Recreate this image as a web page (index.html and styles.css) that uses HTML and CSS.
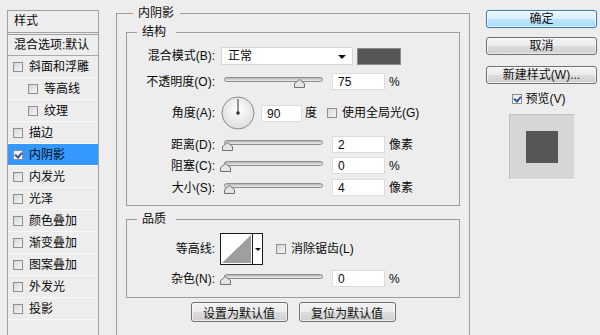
FILE: index.html
```html
<!DOCTYPE html>
<html lang="zh-CN">
<head>
    <meta charset="UTF-8">
    <title>图层样式 - 内阴影</title>
    <link rel="stylesheet" href="styles.css">
</head>
<body>
    <div class="dialog">
        <!-- 样式列表 -->
        <aside class="style-list">
            <div class="list-title">样式</div>
            <div class="list-head">混合选项:默认</div>
            <div class="list-item"><span class="cb"></span>斜面和浮雕</div>
            <div class="list-item sub"><span class="cb"></span>等高线</div>
            <div class="list-item sub"><span class="cb"></span>纹理</div>
            <div class="list-item"><span class="cb"></span>描边</div>
            <div class="list-item active"><span class="cb checked"></span>内阴影</div>
            <div class="list-item"><span class="cb"></span>内发光</div>
            <div class="list-item"><span class="cb"></span>光泽</div>
            <div class="list-item"><span class="cb"></span>颜色叠加</div>
            <div class="list-item"><span class="cb"></span>渐变叠加</div>
            <div class="list-item"><span class="cb"></span>图案叠加</div>
            <div class="list-item"><span class="cb"></span>外发光</div>
            <div class="list-item"><span class="cb"></span>投影</div>
        </aside>

        <!-- 内阴影 设置 -->
        <fieldset class="panel">
            <legend>内阴影</legend>

            <fieldset class="group group-structure">
                <legend>结构</legend>

                <div class="row row-blend">
                    <label class="lbl">混合模式(B):</label>
                    <div class="select">正常<span class="caret"></span></div>
                    <span class="swatch"></span>
                </div>

                <div class="row row-opacity">
                    <label class="lbl">不透明度(O):</label>
                    <div class="slider">
                        <div class="track"></div>
                        <svg class="thumb" style="left:74px" width="11" height="9" viewBox="0 0 11 9"><path d="M5.5 0.5 L10.5 4.5 L10.5 8.5 L0.5 8.5 L0.5 4.5 Z" fill="#e4e4e4" stroke="#707070"/></svg>
                    </div>
                    <div class="field">75</div>
                    <span class="unit">%</span>
                </div>

                <div class="row row-angle">
                    <label class="lbl">角度(A):</label>
                    <svg class="dial" width="34" height="34" viewBox="0 0 34 34">
                        <defs>
                            <radialGradient id="dialFill" cx="50%" cy="40%" r="60%">
                                <stop offset="0" stop-color="#ffffff"/>
                                <stop offset="1" stop-color="#dedede"/>
                            </radialGradient>
                        </defs>
                        <circle cx="17" cy="17" r="16" fill="url(#dialFill)" stroke="#8a8a8a"/>
                        <line x1="17" y1="17" x2="17" y2="3" stroke="#333" stroke-width="1"/>
                        <circle cx="17" cy="17" r="1.8" fill="#333"/>
                    </svg>
                    <div class="field field-angle">90</div>
                    <span class="unit">度</span>
                    <span class="cb cb-global"></span>
                    <span class="cb-label">使用全局光(G)</span>
                </div>

                <div class="row row-distance">
                    <label class="lbl">距离(D):</label>
                    <div class="slider">
                        <div class="track"></div>
                        <svg class="thumb" style="left:2px" width="11" height="9" viewBox="0 0 11 9"><path d="M5.5 0.5 L10.5 4.5 L10.5 8.5 L0.5 8.5 L0.5 4.5 Z" fill="#e4e4e4" stroke="#707070"/></svg>
                    </div>
                    <div class="field">2</div>
                    <span class="unit">像素</span>
                </div>

                <div class="row row-choke">
                    <label class="lbl">阻塞(C):</label>
                    <div class="slider">
                        <div class="track"></div>
                        <svg class="thumb" style="left:0" width="11" height="9" viewBox="0 0 11 9"><path d="M5.5 0.5 L10.5 4.5 L10.5 8.5 L0.5 8.5 L0.5 4.5 Z" fill="#e4e4e4" stroke="#707070"/></svg>
                    </div>
                    <div class="field">0</div>
                    <span class="unit">%</span>
                </div>

                <div class="row row-size">
                    <label class="lbl">大小(S):</label>
                    <div class="slider">
                        <div class="track"></div>
                        <svg class="thumb" style="left:4px" width="11" height="9" viewBox="0 0 11 9"><path d="M5.5 0.5 L10.5 4.5 L10.5 8.5 L0.5 8.5 L0.5 4.5 Z" fill="#e4e4e4" stroke="#707070"/></svg>
                    </div>
                    <div class="field">4</div>
                    <span class="unit">像素</span>
                </div>
            </fieldset>

            <fieldset class="group group-quality">
                <legend>品质</legend>

                <div class="row row-contour">
                    <label class="lbl">等高线:</label>
                    <div class="contour">
                        <svg class="curve" width="31" height="30" viewBox="0 0 31 30"><polygon points="1,29 30,1 30,29" fill="#9f9f9f"/></svg>
                        <div class="contour-drop"><span class="caret"></span></div>
                    </div>
                    <span class="cb cb-anti"></span>
                    <span class="cb-label">消除锯齿(L)</span>
                </div>

                <div class="row row-noise">
                    <label class="lbl">杂色(N):</label>
                    <div class="slider">
                        <div class="track"></div>
                        <svg class="thumb" style="left:0" width="11" height="9" viewBox="0 0 11 9"><path d="M5.5 0.5 L10.5 4.5 L10.5 8.5 L0.5 8.5 L0.5 4.5 Z" fill="#e4e4e4" stroke="#707070"/></svg>
                    </div>
                    <div class="field">0</div>
                    <span class="unit">%</span>
                </div>
            </fieldset>

            <div class="actions">
                <button class="btn btn-wide">设置为默认值</button>
                <button class="btn btn-wide">复位为默认值</button>
            </div>
        </fieldset>

        <!-- 右侧按钮 -->
        <div class="side">
            <button class="btn btn-side btn-default">确定</button>
            <button class="btn btn-side btn-cancel">取消</button>
            <button class="btn btn-side btn-new">新建样式(W)...</button>
            <div class="preview-toggle">
                <span class="cb checked"></span>
                <span>预览(V)</span>
            </div>
            <div class="preview-box">
                <div class="preview-square"></div>
            </div>
        </div>
    </div>
</body>
</html>
```

FILE: styles.css
```css
html, body {
    margin: 0;
    padding: 0;
    height: 335px;
    overflow: hidden;
}

body {
    background-color: #ededed;
    font-family: "Liberation Sans", "Noto Sans CJK SC", sans-serif;
    font-size: 12px;
    line-height: 16px;
    color: #0a0a0a;
}

.dialog {
    display: flex;
    align-items: flex-start;
    padding-left: 7px;
}

/* 样式列表 */
.style-list {
    width: 92px;
    height: 325px;
    margin-top: 10px;
    box-sizing: border-box;
    border: 1px solid #a0a0a0;
    border-bottom: none;
}

.list-title {
    height: 21px;
    line-height: 21px;
    padding-left: 6px;
    border-bottom: 1px solid #a0a0a0;
}

.list-head {
    height: 20px;
    line-height: 20px;
    padding-left: 6px;
    margin-top: 1px;
    border-top: 1px solid #a0a0a0;
    border-bottom: 1px solid #a8a8a8;
}

.list-item {
    display: flex;
    align-items: center;
    height: 21px;
    padding-left: 5px;
    border-bottom: 1px solid #f8f8f8;
}

.list-item.sub {
    padding-left: 20px;
}

.list-item.active {
    background-color: #3399ff;
}

.list-item .cb {
    margin-right: 6px;
}

/* 复选框 */
.cb {
    display: inline-block;
    flex: none;
    width: 10px;
    height: 10px;
    box-sizing: border-box;
    border: 1px solid #8e8e8e;
    background: linear-gradient(135deg, #d6d6d6, #f6f6f6);
    position: relative;
}

.cb.checked {
    background: linear-gradient(135deg, #e6e6e6, #ffffff);
}

.cb.checked::after {
    content: "";
    position: absolute;
    left: 2px;
    top: 0;
    width: 3px;
    height: 5px;
    border-right: 2px solid #3552a8;
    border-bottom: 2px solid #3552a8;
    transform: rotate(40deg);
}

.cb-label {
    margin-left: 5px;
}

/* 主面板 */
.panel {
    width: 354px;
    height: 330px;
    box-sizing: border-box;
    margin: 5px 0 0 17px;
    padding: 0 9px;
    min-width: 0;
    border: 1px solid #9c9c9c;
    border-bottom: none;
}

.panel > legend {
    margin-left: 7px;
    padding: 0 6px 0 5px;
    line-height: 16px;
}

.group {
    margin: 3px 0 0 0;
    padding: 0 0 9px 0;
    min-width: 0;
    border: 1px solid #9c9c9c;
}

.group > legend {
    margin-left: 10px;
    padding: 0 10px 0 5px;
    line-height: 16px;
}

.group-quality {
    margin-top: 5px;
    padding-bottom: 10px;
}

.row {
    display: flex;
    align-items: center;
    height: 17px;
}

.row-blend { margin-top: 7px; height: 18px; }
.row-opacity { margin-top: 8px; }
.row-angle { margin-top: 6px; height: 34px; }
.row-distance { margin-top: 6px; }
.row-choke { margin-top: 4px; }
.row-size { margin-top: 5px; }
.row-contour { margin-top: 6px; height: 32px; }
.row-noise { margin-top: 5px; }

.lbl {
    flex: none;
    width: 88px;
    text-align: right;
    white-space: nowrap;
}

.select {
    position: relative;
    width: 132px;
    height: 18px;
    margin-left: 6px;
    box-sizing: border-box;
    padding-left: 6px;
    line-height: 17px;
    background-color: #fff;
    border: 1px solid #d8d8d8;
}

.caret {
    display: inline-block;
    width: 0;
    height: 0;
    border-left: 4px solid transparent;
    border-right: 4px solid transparent;
    border-top: 4px solid #111;
}

.select .caret {
    position: absolute;
    right: 6px;
    top: 7px;
}

.swatch {
    width: 44px;
    height: 17px;
    margin-left: 4px;
    box-sizing: border-box;
    background-color: #565656;
    border: 1px solid #8a8a8a;
}

/* 滑块 */
.slider {
    position: relative;
    width: 105px;
    height: 17px;
    margin-left: 5px;
    flex: none;
}

.track {
    position: absolute;
    left: 4px;
    right: 2px;
    top: 4px;
    height: 5px;
    box-sizing: border-box;
    border: 1px solid #8d8d8d;
    border-radius: 3px;
    background: linear-gradient(#b4b4b4, #ececec);
}

.thumb {
    position: absolute;
    top: 6px;
}

.field {
    width: 53px;
    height: 17px;
    margin-left: 7px;
    box-sizing: border-box;
    padding-left: 5px;
    line-height: 16px;
    background-color: #fff;
    border: 1px solid #dcdcdc;
    flex: none;
}

.field-angle {
    width: 41px;
    margin-left: 6px;
}

.unit {
    margin-left: 4px;
}

.dial {
    margin-left: 6px;
    flex: none;
}

.row-angle .unit {
    margin-left: 3px;
}

.cb-global {
    margin-left: 10px;
}

/* 等高线 */
.contour {
    display: flex;
    width: 43px;
    height: 32px;
    margin-left: 5px;
    box-sizing: border-box;
    border: 1px solid #1a1a1a;
    background-color: #fff;
}

.curve {
    display: block;
}

.contour-drop {
    flex: 1;
    display: flex;
    justify-content: center;
    align-items: center;
    border-left: 1px solid #1a1a1a;
}

.contour-drop .caret {
    border-left-width: 3px;
    border-right-width: 3px;
    border-top-width: 3px;
}

.cb-anti {
    margin-left: 13px;
}

/* 按钮 */
.btn {
    font-family: inherit;
    font-size: 12px;
    color: #111;
    padding: 0;
    border: 1px solid #707070;
    border-radius: 3px;
    background: linear-gradient(#f3f3f3 0%, #ebebeb 50%, #dddddd 51%, #cfcfcf 100%);
    box-shadow: inset 0 0 0 1px rgba(255,255,255,0.6);
}

.actions {
    display: flex;
    justify-content: center;
    gap: 11px;
    margin-top: 4px;
}

.btn-wide {
    width: 97px;
    height: 20px;
}

.side {
    display: flex;
    flex-direction: column;
    align-items: center;
    width: 111px;
    margin-left: 16px;
    padding-top: 10px;
}

.btn-side {
    width: 111px;
    height: 18px;
    line-height: 16px;
}

.btn-default {
    border-color: #3c7fb1;
    background: linear-gradient(#eaf6fd 0%, #d9f0fc 50%, #bee6fd 51%, #a7d9f5 100%);
    box-shadow: inset 0 0 0 1px rgba(255,255,255,0.7), 0 0 1px #6fb4e0;
}

.btn-cancel {
    margin-top: 9px;
}

.btn-new {
    margin-top: 11px;
}

.preview-toggle {
    display: flex;
    align-items: center;
    gap: 4px;
    height: 16px;
    margin-top: 7px;
    margin-right: 6px;
}

.preview-box {
    display: flex;
    justify-content: center;
    align-items: center;
    width: 66px;
    height: 66px;
    margin-top: 7px;
    box-sizing: border-box;
    background-color: #d6d6d6;
    border: 1px solid #c2c2c2;
    border-bottom-color: #fafafa;
    border-right-color: #e8e8e8;
}

.preview-square {
    width: 32px;
    height: 32px;
    background-color: #565656;
}
```
